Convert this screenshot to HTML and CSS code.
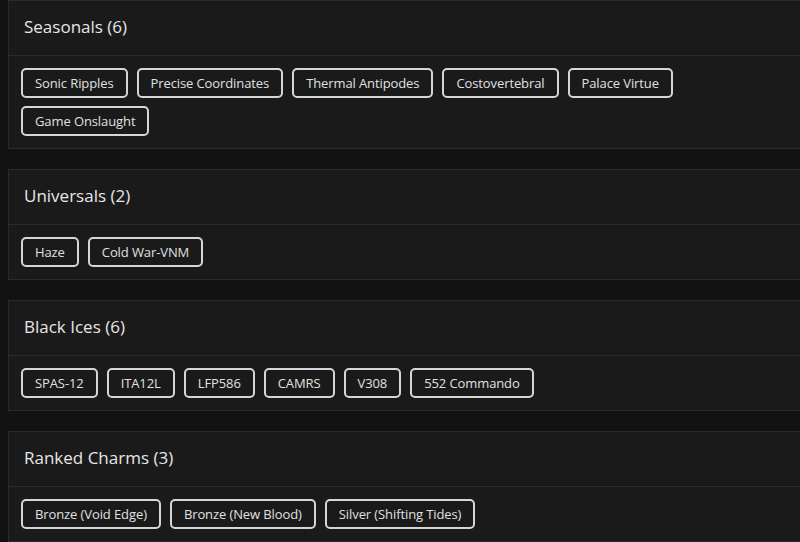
FILE: index.html
```html
<!DOCTYPE html>
<html lang="en">
<head>
    <meta charset="UTF-8">
    <meta name="viewport" content="width=device-width, initial-scale=1.0">
    <title>Collection</title>
    <link rel="stylesheet" href="styles.css">
</head>
<body>
    <div class="card">
        <div class="card-header">Seasonals (6)</div>
        <div class="card-body">
            <span class="chip">Sonic Ripples</span>
            <span class="chip">Precise Coordinates</span>
            <span class="chip">Thermal Antipodes</span>
            <span class="chip">Costovertebral</span>
            <span class="chip">Palace Virtue</span>
            <span class="chip">Game Onslaught</span>
        </div>
    </div>

    <div class="card">
        <div class="card-header">Universals (2)</div>
        <div class="card-body">
            <span class="chip">Haze</span>
            <span class="chip">Cold War-VNM</span>
        </div>
    </div>

    <div class="card">
        <div class="card-header">Black Ices (6)</div>
        <div class="card-body">
            <span class="chip">SPAS-12</span>
            <span class="chip">ITA12L</span>
            <span class="chip">LFP586</span>
            <span class="chip">CAMRS</span>
            <span class="chip">V308</span>
            <span class="chip">552 Commando</span>
        </div>
    </div>

    <div class="card">
        <div class="card-header">Ranked Charms (3)</div>
        <div class="card-body">
            <span class="chip">Bronze (Void Edge)</span>
            <span class="chip">Bronze (New Blood)</span>
            <span class="chip">Silver (Shifting Tides)</span>
        </div>
    </div>
</body>
</html>
```

FILE: styles.css
```css
body {
    margin: 0;
    padding: 0 0 0 8px;
    background-color: #121212;
    font-family: "Open Sans", Arial, sans-serif;
    color: #e6e6e6;
    overflow: hidden;
}
.card {
    width: 800px;
    background-color: #1a1a1a;
    border: 1px solid #2a2a2a;
    margin-bottom: 20px;
}
.card-header {
    height: 50px;
    display: flex;
    align-items: center;
    padding: 0 0 4px 15px;
    font-size: 17px;
    font-weight: 500;
    border-bottom: 1px solid #2a2a2a;
}
.card-body {
    display: flex;
    flex-wrap: wrap;
    gap: 8px 9px;
    padding: 12px;
}
.chip {
    display: flex;
    align-items: center;
    height: 30px;
    box-sizing: border-box;
    padding: 0 12px;
    border: 2px solid #d6d6d6;
    border-radius: 5px;
    font-size: 13px;
    letter-spacing: -0.1px;
    color: #e0e0e0;
}
```
